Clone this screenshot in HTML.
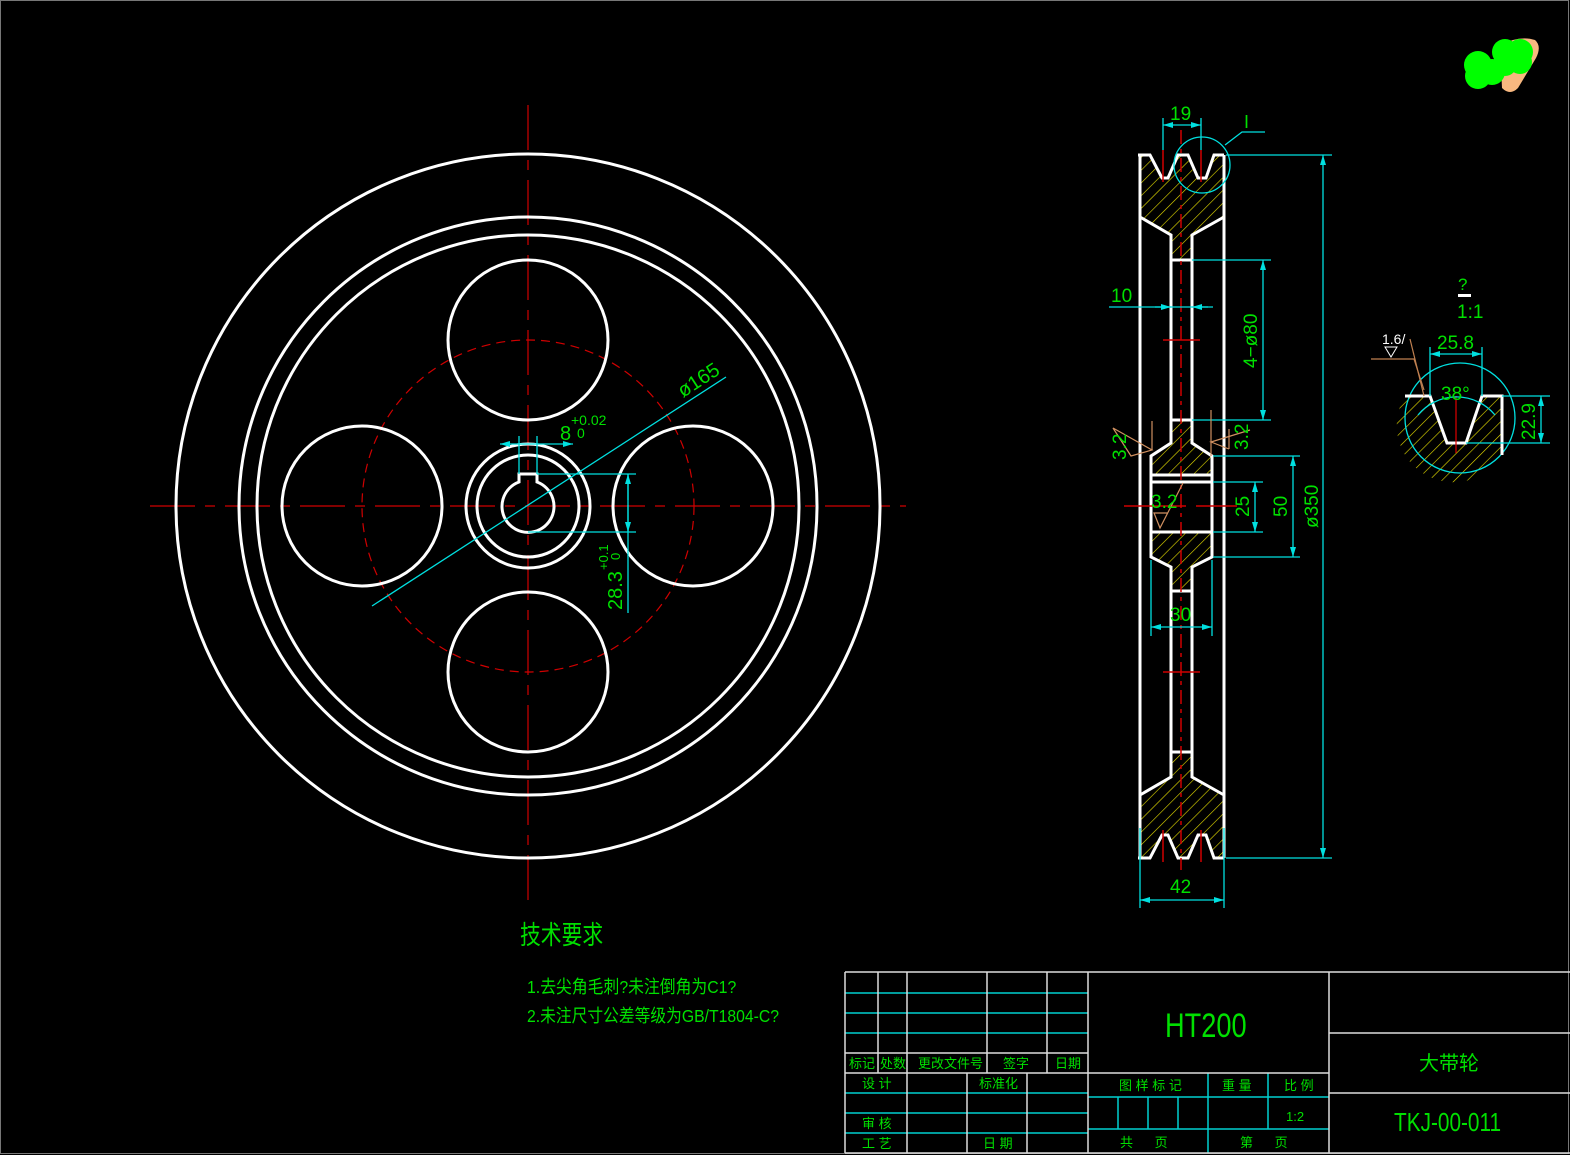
<!DOCTYPE html>
<html><head><meta charset="utf-8"><style>
html,body{margin:0;padding:0;background:#000;}
svg{display:block;}
text{font-family:"Liberation Sans","Noto Sans CJK SC",sans-serif;fill:#00e000;}
</style></head><body>
<svg width="1570" height="1155" viewBox="0 0 1570 1155" xmlns="http://www.w3.org/2000/svg">
<defs>
<pattern id="h" patternUnits="userSpaceOnUse" width="9" height="9" patternTransform="rotate(45)">
<line x1="0" y1="0" x2="0" y2="9" stroke="#e8e000" stroke-width="1.2"/>
</pattern>
<marker id="a" viewBox="0 0 10 6" refX="10" refY="3" markerWidth="10" markerHeight="6" orient="auto-start-reverse" markerUnits="userSpaceOnUse"><path d="M0,0L10,3L0,6z" fill="#00e0e0"/></marker>
</defs>
<rect x="0.5" y="0.5" width="1568" height="1153" fill="none" stroke="#777" stroke-width="1"/>

<!-- logo -->
<path d="M1500,45 Q1520,35 1535,40 Q1542,46 1536,58 L1518,88 Q1510,96 1502,88 Z" fill="#f8b880"/>
<g fill="#00ff00"><circle cx="1478" cy="65" r="14"/><circle cx="1478" cy="76" r="13"/><circle cx="1492" cy="72" r="13"/><circle cx="1505" cy="52" r="13"/><circle cx="1520" cy="52" r="13"/><circle cx="1505" cy="64" r="12"/><circle cx="1520" cy="62" r="12"/></g>

<!-- front view -->
<g stroke="#d00000" stroke-width="1.2" fill="none" stroke-dasharray="45,10,10,10">
<line x1="150" y1="506" x2="906" y2="506"/>
<line x1="528" y1="105" x2="528" y2="905"/>
</g>
<circle cx="528" cy="506" r="166" stroke="#d00000" stroke-width="1.2" fill="none" stroke-dasharray="9,6"/>
<g stroke="#fff" stroke-width="3" fill="none">
<circle cx="528" cy="506" r="352"/>
<circle cx="528" cy="506" r="289"/>
<circle cx="528" cy="506" r="271"/>
<circle cx="528" cy="340" r="80"/>
<circle cx="528" cy="672" r="80"/>
<circle cx="362" cy="506" r="80"/>
<circle cx="693" cy="506" r="80"/>
<circle cx="528" cy="506" r="62"/>
<circle cx="528" cy="506" r="51"/>
<path d="M519,482 A26,26 0 1 0 537,482 L537,474 L519,474 Z"/>
</g>
<g stroke="#00e0e0" stroke-width="1.3" fill="none">
<line x1="372" y1="606" x2="726" y2="377"/>
<line x1="500" y1="444" x2="573" y2="444" marker-start="url(#a)" marker-end="url(#a)"/>
<line x1="519" y1="436" x2="519" y2="474"/><line x1="537" y1="436" x2="537" y2="474"/>
<line x1="537" y1="474" x2="636" y2="474"/><line x1="528" y1="532" x2="636" y2="532"/>
<line x1="628" y1="474" x2="628" y2="613" />
<line x1="628" y1="500" x2="628" y2="474" marker-end="url(#a)"/>
<line x1="628" y1="505" x2="628" y2="532" marker-end="url(#a)"/>
</g>
<text x="560" y="440" font-size="20">8</text>
<text x="571" y="425" font-size="14">+0.02</text>
<text x="577" y="438" font-size="14">0</text>
<text transform="translate(683,398) rotate(-33)" font-size="20">ø165</text>
<text transform="translate(622,610) rotate(-90)" font-size="20">28.3</text>
<text transform="translate(608,570) rotate(-90)" font-size="13">+0.1</text>
<text transform="translate(620,560) rotate(-90)" font-size="13">0</text>

<!-- side view -->
<path d="M1140,155 L1150,155 L1162,178 L1168,178 L1178,155 L1188,155 L1198,178 L1206,178 L1214,155 L1224,155 L1224,217 L1192,235 L1192,260 L1171,260 L1171,235 L1140,217 Z" fill="url(#h)"/>
<path d="M1171,420 L1192,420 L1192,443 L1212,456 L1212,475 L1151,475 L1151,456 L1171,443 Z" fill="url(#h)"/>
<path d="M1151,532 L1212,532 L1212,557 L1192,567 L1192,591 L1171,591 L1171,567 L1151,557 Z" fill="url(#h)"/>
<path d="M1140,858 L1150,858 L1162,835 L1168,835 L1178,858 L1188,858 L1198,835 L1206,835 L1214,858 L1224,858 L1224,795 L1192,777 L1192,752 L1171,752 L1171,777 L1140,795 Z" fill="url(#h)"/>
<g stroke="#fff" stroke-width="3" fill="none">
<path d="M1138,155 L1150,155 L1162,178 L1168,178 L1178,155 L1188,155 L1198,178 L1206,178 L1214,155 L1224,155"/>
<path d="M1138,858 L1150,858 L1162,835 L1168,835 L1178,858 L1188,858 L1198,835 L1206,835 L1214,858 L1224,858"/>
<line x1="1140" y1="155" x2="1140" y2="858"/><line x1="1224" y1="155" x2="1224" y2="858"/>
<path d="M1140,217 L1171,235 L1171,443 L1151,456 L1151,557 L1171,567 L1171,777 L1140,795"/>
<path d="M1224,217 L1192,235 L1192,443 L1212,456 L1212,557 L1192,567 L1192,777 L1224,795"/>
<line x1="1171" y1="260" x2="1192" y2="260"/><line x1="1171" y1="420" x2="1192" y2="420"/>
<line x1="1171" y1="591" x2="1192" y2="591"/><line x1="1171" y1="752" x2="1192" y2="752"/>
<line x1="1151" y1="475" x2="1212" y2="475"/><line x1="1151" y1="482" x2="1212" y2="482"/>
<line x1="1151" y1="532" x2="1212" y2="532"/>
</g>
<g stroke="#d00000" stroke-width="1.5" fill="none">
<line x1="1181" y1="130" x2="1181" y2="870" stroke-dasharray="14,5,4,5"/>
<line x1="1163" y1="150" x2="1163" y2="182"/><line x1="1201" y1="150" x2="1201" y2="182"/>
<line x1="1163" y1="830" x2="1163" y2="862"/><line x1="1201" y1="830" x2="1201" y2="862"/>
<line x1="1163" y1="340" x2="1200" y2="340"/><line x1="1163" y1="672" x2="1200" y2="672"/>
<line x1="1124" y1="506" x2="1186" y2="506"/><line x1="1196" y1="506" x2="1237" y2="506"/>
</g>
<g stroke="#00e0e0" stroke-width="1.3" fill="none">
<circle cx="1202" cy="165" r="28"/>
<path d="M1225,145 L1242,132 L1265,132"/>
<line x1="1163" y1="125" x2="1201" y2="125" marker-start="url(#a)" marker-end="url(#a)"/>
<line x1="1163" y1="118" x2="1163" y2="150"/><line x1="1201" y1="118" x2="1201" y2="150"/>
<line x1="1226" y1="155" x2="1332" y2="155"/><line x1="1226" y1="858" x2="1332" y2="858"/>
<line x1="1323" y1="155" x2="1323" y2="858" marker-start="url(#a)" marker-end="url(#a)"/>
<line x1="1192" y1="260" x2="1271" y2="260"/><line x1="1192" y1="420" x2="1271" y2="420"/>
<line x1="1263" y1="260" x2="1263" y2="420" marker-start="url(#a)" marker-end="url(#a)"/>
<line x1="1109" y1="307" x2="1213" y2="307"/>
<line x1="1155" y1="307" x2="1171" y2="307" marker-end="url(#a)"/>
<line x1="1208" y1="307" x2="1192" y2="307" marker-end="url(#a)"/>
<line x1="1213" y1="456" x2="1300" y2="456"/><line x1="1213" y1="557" x2="1300" y2="557"/>
<line x1="1293" y1="456" x2="1293" y2="557" marker-start="url(#a)" marker-end="url(#a)"/>
<line x1="1213" y1="482" x2="1263" y2="482"/><line x1="1213" y1="532" x2="1263" y2="532"/>
<line x1="1255" y1="482" x2="1255" y2="532" marker-start="url(#a)" marker-end="url(#a)"/>
<line x1="1151" y1="560" x2="1151" y2="636"/><line x1="1212" y1="560" x2="1212" y2="636"/>
<line x1="1151" y1="627" x2="1212" y2="627" marker-start="url(#a)" marker-end="url(#a)"/>
<line x1="1140" y1="828" x2="1140" y2="908"/><line x1="1224" y1="828" x2="1224" y2="908"/>
<line x1="1140" y1="900" x2="1224" y2="900" marker-start="url(#a)" marker-end="url(#a)"/>
</g>
<g stroke="#d09060" stroke-width="1.2" fill="none">
<line x1="1152" y1="421" x2="1152" y2="450"/><path d="M1113,428 L1152,450 L1131,456 Z"/>
<line x1="1211" y1="410" x2="1211" y2="456"/><path d="M1250,430 L1211,442 L1229,449"/><line x1="1229" y1="429" x2="1229" y2="449"/>
<path d="M1183,483 L1160,528 L1154,513 L1168,513"/>
</g>
<text x="1170" y="120" font-size="19">19</text>
<text x="1244" y="128" font-size="18">I</text>
<text x="1111" y="302" font-size="19">10</text>
<text transform="translate(1257,368) rotate(-90)" font-size="19">4−ø80</text>
<text transform="translate(1126,460) rotate(-90)" font-size="19">3.2</text>
<text transform="translate(1248,450) rotate(-90)" font-size="19">3.2</text>
<text x="1151" y="508" font-size="19">3.2</text>
<text transform="translate(1249,517) rotate(-90)" font-size="19">25</text>
<text transform="translate(1287,517) rotate(-90)" font-size="19">50</text>
<text transform="translate(1318,528) rotate(-90)" font-size="19">ø350</text>
<text x="1170" y="621" font-size="19">30</text>
<text x="1170" y="893" font-size="19">42</text>

<!-- detail -->
<path d="M1403,396 L1430,396 L1447,443 L1466,443 L1482,396 L1502,396 L1502,455 A55,55 0 0 1 1405,396 Z" fill="url(#h)"/>
<circle cx="1460" cy="418" r="55" stroke="#00e0e0" stroke-width="1.3" fill="none"/>
<path d="M1405,396 L1430,396 L1447,443 L1466,443 L1482,396 L1502,396 L1502,455" stroke="#fff" stroke-width="3" fill="none"/>
<line x1="1456" y1="396" x2="1456" y2="453" stroke="#e00000" stroke-width="1.2"/>
<g stroke="#00e0e0" stroke-width="1.3" fill="none">
<line x1="1430" y1="347" x2="1430" y2="396"/><line x1="1482" y1="347" x2="1482" y2="396"/>
<line x1="1430" y1="354" x2="1482" y2="354" marker-start="url(#a)" marker-end="url(#a)"/>
<line x1="1502" y1="396" x2="1550" y2="396"/><line x1="1466" y1="443" x2="1550" y2="443"/>
<line x1="1541" y1="396" x2="1541" y2="443" marker-start="url(#a)" marker-end="url(#a)"/>
<path d="M1418,415 A50,50 0 0 1 1495,415"/>
</g>
<g stroke="#c08050" stroke-width="1.2" fill="none"><path d="M1371,359 L1414,359 L1424,390"/><line x1="1410" y1="339" x2="1424" y2="396"/></g>
<path d="M1385,347 L1397,347 L1391,357 Z" stroke="#fff" stroke-width="1" fill="none"/>
<text x="1382" y="344" font-size="14" style="fill:#fff">1.6/</text>
<text x="1437" y="349" font-size="19">25.8</text>
<text x="1441" y="400" font-size="19">38°</text>
<text transform="translate(1535,440) rotate(-90)" font-size="19">22.9</text>
<text x="1458" y="290" font-size="17">?</text>
<rect x="1458" y="294" width="13" height="3" fill="#fff"/>
<text x="1457" y="318" font-size="19">1:1</text>

<!-- tech -->
<text transform="translate(520,944) scale(0.8,1)" font-size="26">技术要求</text>
<text transform="translate(527,993) scale(0.88,1)" font-size="18">1.去尖角毛刺?未注倒角为C1?</text>
<text transform="translate(527,1022) scale(0.875,1)" font-size="18">2.未注尺寸公差等级为GB/T1804-C?</text>

<!-- title block -->
<g stroke="#00d0d0" stroke-width="1.5">
<line x1="845" y1="993" x2="1088" y2="993"/><line x1="845" y1="1013" x2="1088" y2="1013"/><line x1="845" y1="1033" x2="1088" y2="1033"/>
<line x1="845" y1="1093" x2="1088" y2="1093"/><line x1="845" y1="1113" x2="1088" y2="1113"/><line x1="845" y1="1133" x2="1088" y2="1133"/>
<line x1="1088" y1="1097" x2="1329" y2="1097"/><line x1="1088" y1="1129" x2="1329" y2="1129"/>
<line x1="1118" y1="1097" x2="1118" y2="1129"/><line x1="1148" y1="1097" x2="1148" y2="1129"/><line x1="1178" y1="1097" x2="1178" y2="1129"/>
<line x1="1208" y1="1073" x2="1208" y2="1153"/><line x1="1268" y1="1073" x2="1268" y2="1129"/>
</g>
<g stroke="#ddd" stroke-width="1.5" fill="none">
<line x1="845" y1="972" x2="1570" y2="972"/><line x1="845" y1="1153" x2="1570" y2="1153"/>
<line x1="845" y1="972" x2="845" y2="1153"/>
<line x1="878" y1="972" x2="878" y2="1073"/><line x1="907" y1="972" x2="907" y2="1073"/><line x1="987" y1="972" x2="987" y2="1073"/><line x1="1047" y1="972" x2="1047" y2="1073"/>
<line x1="907" y1="1073" x2="907" y2="1153"/><line x1="967" y1="1073" x2="967" y2="1153"/><line x1="1027" y1="1073" x2="1027" y2="1153"/>
<line x1="1088" y1="972" x2="1088" y2="1153"/><line x1="1329" y1="972" x2="1329" y2="1153"/>
<line x1="845" y1="1053" x2="1088" y2="1053"/><line x1="845" y1="1073" x2="1329" y2="1073"/>
<line x1="1329" y1="1033" x2="1570" y2="1033"/><line x1="1329" y1="1093" x2="1570" y2="1093"/>
</g>
<g font-size="13">
<text x="849" y="1068">标记</text><text x="880" y="1068">处数</text><text x="918" y="1068">更改文件号</text><text x="1003" y="1068">签字</text><text x="1055" y="1068">日期</text>
<text x="862" y="1088">设 计</text><text x="979" y="1088">标准化</text>
<text x="862" y="1128">审 核</text><text x="862" y="1148">工 艺</text><text x="983" y="1148">日 期</text>
<text x="1119" y="1090">图 样 标 记</text><text x="1222" y="1090">重 量</text><text x="1284" y="1090">比 例</text>
<text x="1286" y="1121">1:2</text>
<text x="1120" y="1147">共&#160;&#160;&#160;&#160;&#160;&#160;页</text><text x="1240" y="1147">第&#160;&#160;&#160;&#160;&#160;&#160;页</text>
</g>
<text transform="translate(1165,1037) scale(0.8,1)" font-size="34">HT200</text>
<text x="1419" y="1070" font-size="20">大带轮</text>
<text transform="translate(1394,1131) scale(0.8,1)" font-size="26">TKJ-00-011</text>
</svg>
</body></html>
